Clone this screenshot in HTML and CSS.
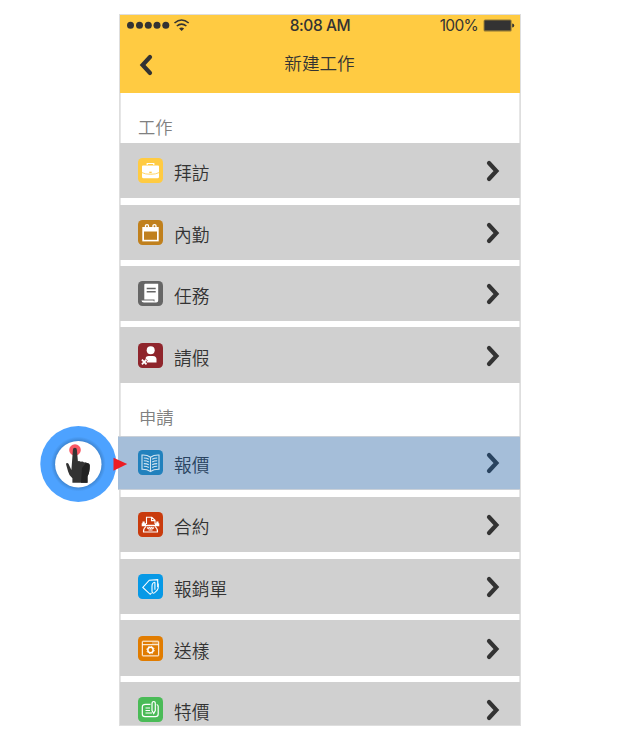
FILE: index.html
```
<!DOCTYPE html>
<html lang="zh-Hant">
<head>
<meta charset="utf-8">
<title>新建工作</title>
<link rel="stylesheet" href="styles.css">
</head>
<body>
<svg width="0" height="0" class="defs"><defs>
<symbol id="chev" viewBox="0 0 14 22"><path d="M3 3l7.4 8L3 19" fill="none" stroke="currentColor" stroke-width="4.2" stroke-linecap="round" stroke-linejoin="miter"/></symbol>
</defs></svg>
<main class="phone">
  <header class="header">
    <div class="status">
      <svg class="signal" width="64" height="14" viewBox="0 0 64 14"><g fill="#333"><circle cx="3.500" cy="6.300" r="3.500"/><circle cx="12.500" cy="6.300" r="3.500"/><circle cx="21.300" cy="6.300" r="3.500"/><circle cx="30" cy="6.300" r="3.500"/><circle cx="38.800" cy="6.300" r="3.500"/><path d="M54.600 8.500q1.400 0 2.500.9l-2.500 2.700-2.500-2.700q1.100-.9 2.500-.9z"/></g><g fill="none" stroke="#333" stroke-width="1.600"><path d="M47.500 4q7.100-6 14.200 0M49.800 7q4.800-3.900 9.600 0"/></g></svg>
      <span class="time">8:08 AM</span>
      <span class="power">100%<svg width="32" height="14" viewBox="0 0 32 14"><rect x=".6" y=".4" width="28" height="12" rx="1.500" fill="#8c7436"/><rect x="1.600" y="1.500" width="26" height="9.800" rx=".6" fill="#333"/><path d="M29.200 4.500q2 0 2 2t-2 2z" fill="#333"/></svg></span>
    </div>
    <div class="nav">
      <svg class="back" width="14" height="22"><use href="#chev"/></svg>
      <h1>新建工作</h1>
    </div>
  </header>
  <section class="work">
    <h2>工作</h2>
    <ul>
      <li><svg class="icon" viewBox="0 0 25 25"><rect width="25" height="25" rx="4.500" fill="#ffcb42"/><path d="M9.200 7V5.500h6.600V7" fill="none" stroke="#fff" stroke-width="1.200"/><path d="M5 7.400h15q1 0 1 1v10.300q0 1.500-1.500 1.500h-14Q4 20.200 4 18.700V8.400q0-1 1-1z" fill="#fff"/><path d="M4 14.600q3 1.700 8.500 1.700t8.500-1.700" fill="none" stroke="#ffcb42" stroke-width=".8"/><path d="M11.300 13.700h2.400v1.500h-2.400z" fill="#ffcb42"/></svg><span>拜訪</span><svg class="arrow"><use href="#chev"/></svg></li>
      <li><svg class="icon" viewBox="0 0 25 25"><rect width="25" height="25" rx="4.500" fill="#c0801d"/><path d="M4.300 7h16.400v14.400H4.300z" fill="#fff"/><path d="M6 11.500h13v8.300H6z" fill="#c0801d"/><g fill="#c0801d" stroke="#fff" stroke-width="1.300"><circle cx="9" cy="6.200" r="1.600"/><circle cx="16.500" cy="6.200" r="1.600"/></g></svg><span>內勤</span><svg class="arrow"><use href="#chev"/></svg></li>
      <li><svg class="icon" viewBox="0 0 25 25"><rect width="25" height="25" rx="4.500" fill="#666"/><path d="M6.300 3.700q0-1 1-1h12.900v16.800q0 2-2 2H6q-2.500 0-2.500-2h12q0 1 1 1V18.600H6.300z" fill="#fff"/><path d="M8.700 7.500h9M8.700 10.700h9" stroke="#666" stroke-width="1.400"/></svg><span>任務</span><svg class="arrow"><use href="#chev"/></svg></li>
      <li><svg class="icon" viewBox="0 0 25 25"><rect width="25" height="25" rx="4.500" fill="#8f252c"/><circle cx="12.700" cy="7.300" r="4" fill="#fff"/><path d="M7.500 19.500v-3.300q0-3.200 3.200-3.200H15q3.500 0 3.500 3.500v3z" fill="#fff"/><path d="M3.700 16.500l5 5m0-5l-5 5" stroke="#8f252c" stroke-width="3"/><path d="M3.900 16.700l4.600 4.600m0-4.600l-4.600 4.600" stroke="#fff" stroke-width="1.800"/></svg><span>請假</span><svg class="arrow"><use href="#chev"/></svg></li>
    </ul>
  </section>
  <section class="apply">
    <h2>申請</h2>
    <ul>
      <li class="selected"><svg class="icon" viewBox="0 0 25 25"><rect width="25" height="25" rx="4.500" fill="#2181bd"/><g fill="none" stroke="#d3e4f1" stroke-width="1.100"><path d="M12.500 7.300Q9 4.700 4 5v14.200q5-.2 8.500 2.300 3.500-2.500 8.500-2.300V5q-5-.3-8.500 2.300zv14.200M5.800 8q3 0 5 1.200M5.800 10.800q3 0 5 1.200m-5 1.600q3 0 5 1.200m-5 1.500q3 0 5 1.200M19.200 8q-3 0-5 1.200m5 1.600q-3 0-5 1.200m5 1.600q-3 0-5 1.200m5 1.500q-3 0-5 1.200"/></g></svg><span>報價</span><svg class="arrow"><use href="#chev"/></svg></li>
      <li><svg class="icon" viewBox="0 0 25 25"><rect width="25" height="25" rx="4.500" fill="#c93b0d"/><g fill="none" stroke="#fff" stroke-width="1.100"><path d="M8.500 12V5.300h5.300L17 8.300V12M13.500 5.300v3.300H17"/><path d="M8 14.300q-3 2.500-2.500 5.700h14q.500-3.200-2.500-5.700"/><path d="M9 15.500l1.200 1 1.200-1 1.100 1 1.100-1 1.200 1 1.200-1M10.500 18h4"/></g><path d="M4.500 9.500h2.200v1.800H8v1.500h9v-1.500h1.300V9.500h2.200v1.800h.8v2.900H3.700v-2.900h.8z" fill="#fff"/></svg><span>合約</span><svg class="arrow"><use href="#chev"/></svg></li>
      <li><svg class="icon" viewBox="0 0 25 25"><rect width="25" height="25" rx="4.500" fill="#0799e6"/><g fill="none" stroke="#fff" stroke-width="1.100"><path d="M13.500 18.800l-1.300 1.500-7.400-6.800 6.500-7.300 8.400-.5v7.300"/><path d="M16.900 8.300q-2.900.5-2.900 4v5q0 1.900 1.400 1.900 1 0 2-1.200l2-2.200q.8-.9.800-2.500V9.500M16.900 8.300v7.500"/></g></svg><span>報銷單</span><svg class="arrow"><use href="#chev"/></svg></li>
      <li><svg class="icon" viewBox="0 0 25 25"><rect width="25" height="25" rx="4.500" fill="#e17c00"/><g fill="none" stroke="#fff" stroke-width="1"><rect x="4.300" y="5.200" width="16.400" height="14.700" rx=".5"/><path d="M4.300 8.700h16.400M14.500 7h1m1 0h1m1 0h1"/><circle cx="12.500" cy="14" r="2.700" stroke-width="1.500"/><circle cx="12.500" cy="14" r="3.700" stroke-dasharray="1.400 1.500"/></g></svg><span>送樣</span><svg class="arrow"><use href="#chev"/></svg></li>
      <li class="last"><svg class="icon" viewBox="0 0 25 25"><rect width="25" height="25" rx="4.500" fill="#4abb57"/><g fill="none" stroke="#fff" stroke-width="1.200"><path d="M12.500 7.300h-5Q4.300 7.300 4.300 10v7q0 2.700 2.700 2.700h10.500q2.700 0 2.700-2.700V9.500q0-1.600-1.500-2"/><path d="M7.500 11h4.500m-4.500 2.500h4.500M7.500 16h6.500M14 7q0-2.500 1.700-2.500T17.300 7v6.500l-1.600 3-1.700-3z"/></g></svg><span>特價</span><svg class="arrow"><use href="#chev"/></svg></li>
    </ul>
  </section>
</main>
<svg class="touch" width="92" height="82" viewBox="0 0 92 82">
  <defs><radialGradient id="ring"><stop offset=".6" stop-color="#3d84d0"/><stop offset=".72" stop-color="#4da2ff"/></radialGradient></defs>
  <circle cx="40.300" cy="41" r="38" fill="url(#ring)"/><circle cx="40.300" cy="41.200" r="23.200" fill="#fff"/>
  <circle cx="37" cy="27" r="5.800" fill="#fa5864"/>
  <path d="M34.900 27q0-2.300 2-2.300t2 2.300l1 11.200q1.300-.8 3 .6 1.700-.7 3.200.7 1.700-.5 3 .6 2.700-.2 2.700 2.500 0 7-2.300 11v6.100H34.400v-4.500q-3.600-3-4.300-6.700l-2-7q-.1-1.700 1.300-1.400 1.200.3 2 2.700l2 4.200z" fill="#333"/><path d="M44 45l4-5q3.700 0 3.700 2.600 0 7-2.200 11v6.100H43z" fill="#222"/>
  <path d="M75.500 34.700L89.200 41l-13.700 6.700z" fill="#ed1c24"/>
</svg>
</body>
</html>
```
FILE: styles.css
```
* { box-sizing: border-box; }
body {
  margin: 0;
  height: 740px;
  padding: 14px 0 0 119px;
  overflow: hidden;
  position: relative;
  background: #fff;
  color: #333;
  font-family: "Noto Sans CJK TC", sans-serif;
}
.defs { position: absolute; }
.phone {
  width: 402px;
  height: 712px;
  border: 1px solid #dedede;
  box-shadow: inset 0 0 0 1px #e6e6e6;
}
.header { height: 78px; background: #ffcb42; }
.status {
  height: 21px;
  display: grid;
  grid-template-columns: 1fr auto 1fr;
  align-items: center;
  padding: 0 5px 0 7px;
  font: 15.500px/21px Inter, sans-serif;
  letter-spacing: -.3px;
}
.time { font-weight: 500; margin: 0 1px 0 -1px; letter-spacing: -.4px; }
.power { display: flex; align-items: center; justify-content: flex-end; gap: 5px; letter-spacing: -.7px; }
.nav {
  height: 57px;
  display: grid;
  grid-template-columns: 60px 1fr 61px;
  align-items: center;
}
.back { margin: 1px 0 0 19px; transform: scaleX(-1); }
h1, h2 { margin: 0; font-size: 17.600px; font-weight: 350; }
h1 { text-align: center; margin-top: -5px; }
h2 { color: #808080; padding-left: 19px; font-size: 17.300px; line-height: 26px; }
.work h2 { height: 50.100px; padding: 21px 0 0 18px; }
.apply h2 { height: 52.750px; padding-top: 21px; }
ul { list-style: none; margin: 0; padding: 0; }
li {
  height: 55.400px;
  margin-bottom: 6.050px;
  display: flex;
  align-items: center;
  padding: 0 20px .2px 18px;
  font-size: 17.700px;
  font-weight: 350;
  background: #d0d0d0;
}
.apply li { margin-bottom: 6.300px; }
ul li:last-child { margin-bottom: 0; }
li span { margin: 3px auto 0 11px; }
.icon { width: 25px; height: 25px; }
.arrow { width: 14px; height: 22px; margin-top: 1px; }
.apply .last {
  height: 43px;
  align-items: flex-start;
  padding-top: 15px;
}
.last .arrow { margin-top: 2px; }
.last span { margin-top: 1px; line-height: 26px; }
.apply .selected {
  height: 54.600px;
  margin-bottom: 6.900px;
  margin-left: -2px;
  padding-left: 20px;
  padding-bottom: 1px;
  color: #29435f;
  background: #a5bed9;
  border: solid #c9d0d8;
  border-width: 1px 0;
}
.touch { position: absolute; left: 38px; top: 423px; }
```
